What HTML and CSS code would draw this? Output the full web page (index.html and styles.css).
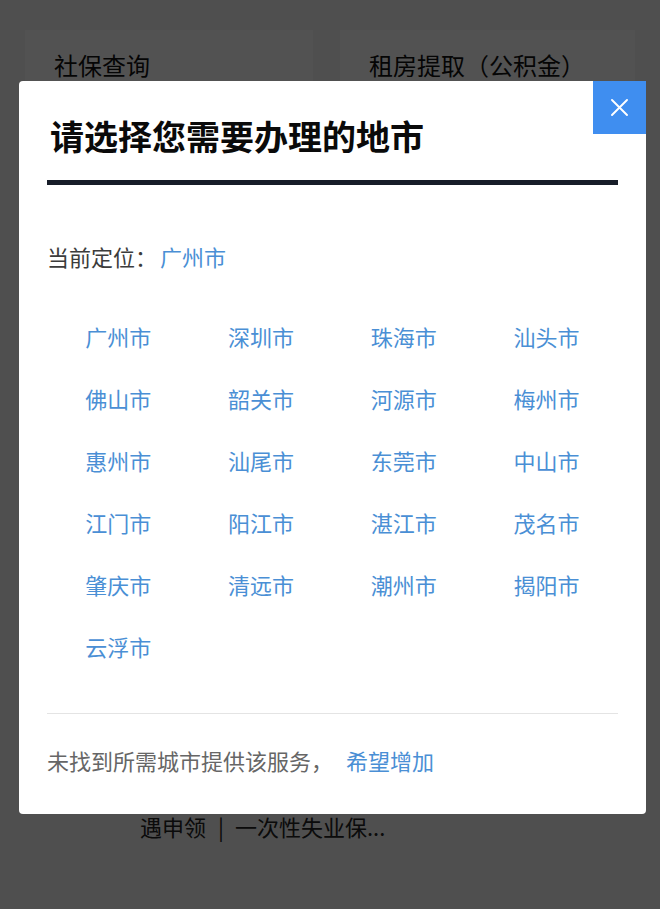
FILE: index.html
```html
<!DOCTYPE html>
<html lang="zh-CN">
<head>
<meta charset="utf-8">
<title>选择地市</title>
<link rel="stylesheet" href="styles.css">
</head>
<body>
<div class="page">
  <div class="cards">
    <div class="card">社保查询</div>
    <div class="card">租房提取（公积金）</div>
  </div>
  <div class="news">遇申领<span class="bar">|</span>一次性失业保...</div>
</div>

<div class="overlay">
  <div class="modal">
    <button class="close" aria-label="关闭">
      <svg width="17" height="17" viewBox="0 0 17 17"><path d="M1 1 L16 16 M16 1 L1 16" stroke="#fff" stroke-width="1.9" stroke-linecap="round" fill="none"/></svg>
    </button>
    <h1 class="title">请选择您需要办理的地市</h1>
    <div class="rule"></div>
    <div class="current">当前定位：<span class="link loc">广州市</span></div>
    <div class="cities">
      <span>广州市</span><span>深圳市</span><span>珠海市</span><span>汕头市</span>
      <span>佛山市</span><span>韶关市</span><span>河源市</span><span>梅州市</span>
      <span>惠州市</span><span>汕尾市</span><span>东莞市</span><span>中山市</span>
      <span>江门市</span><span>阳江市</span><span>湛江市</span><span>茂名市</span>
      <span>肇庆市</span><span>清远市</span><span>潮州市</span><span>揭阳市</span>
      <span>云浮市</span>
    </div>
    <div class="sep"></div>
    <div class="footer">未找到所需城市提供该服务，<span class="link more">希望增加</span></div>
  </div>
</div>
</body>
</html>
```
FILE: styles.css
```css
html, body {
  margin: 0;
  padding: 0;
}
body {
  background: #f4f4f4;
  font-family: "Noto Sans CJK SC", "Noto Sans", sans-serif;
  width: 660px;
  height: 909px;
  overflow: hidden;
}
.page {
  padding: 30px 25px 0;
}
.cards {
  display: grid;
  grid-template-columns: 288px 295px;
  column-gap: 27px;
}
.card {
  background: #fff;
  height: 120px;
  box-sizing: border-box;
  padding: 18px 29px;
  font-size: 24px;
  line-height: 34px;
  color: #111;
}
.news {
  margin-top: 660px;
  padding-left: 115px;
  font-size: 22px;
  line-height: 32px;
  color: #222;
}
.bar {
  display: inline-block;
  margin: 0 11px 0 12px;
}
.overlay {
  position: fixed;
  inset: 0;
  background: rgba(0, 0, 0, 0.68);
}
.modal {
  position: relative;
  margin: 81px 0 0 19px;
  width: 627px;
  height: 733px;
  box-sizing: border-box;
  padding: 35px 28px 0;
  background: #fff;
  border-radius: 4px;
}
.close {
  position: absolute;
  top: 0;
  right: 0;
  width: 53px;
  height: 53px;
  border: 0;
  padding: 0;
  background: #3f8ef0;
  display: flex;
  align-items: center;
  justify-content: center;
}
.title {
  margin: 0 0 0 3px;
  font-size: 34px;
  line-height: 40px;
  font-weight: 700;
  color: #0a0a0a;
}
.rule {
  margin-top: 24px;
  height: 5px;
  background: #171d29;
}
.current {
  margin-top: 55px;
  font-size: 22px;
  line-height: 32px;
  color: #3c3c3c;
}
.link {
  color: #4a8fd5;
}
.loc {
  margin-left: 3px;
}
.more {
  margin-left: 13px;
}
.cities {
  margin-top: 33px;
  display: grid;
  grid-template-columns: repeat(4, 1fr);
  grid-auto-rows: 62px;
  font-size: 22px;
  line-height: 62px;
  color: #4a8fd5;
  text-align: center;
}
.sep {
  margin-top: 36px;
  border-top: 1px solid #e4e4e4;
}
.footer {
  margin-top: 30px;
  font-size: 22px;
  line-height: 32px;
  color: #666;
}
```
